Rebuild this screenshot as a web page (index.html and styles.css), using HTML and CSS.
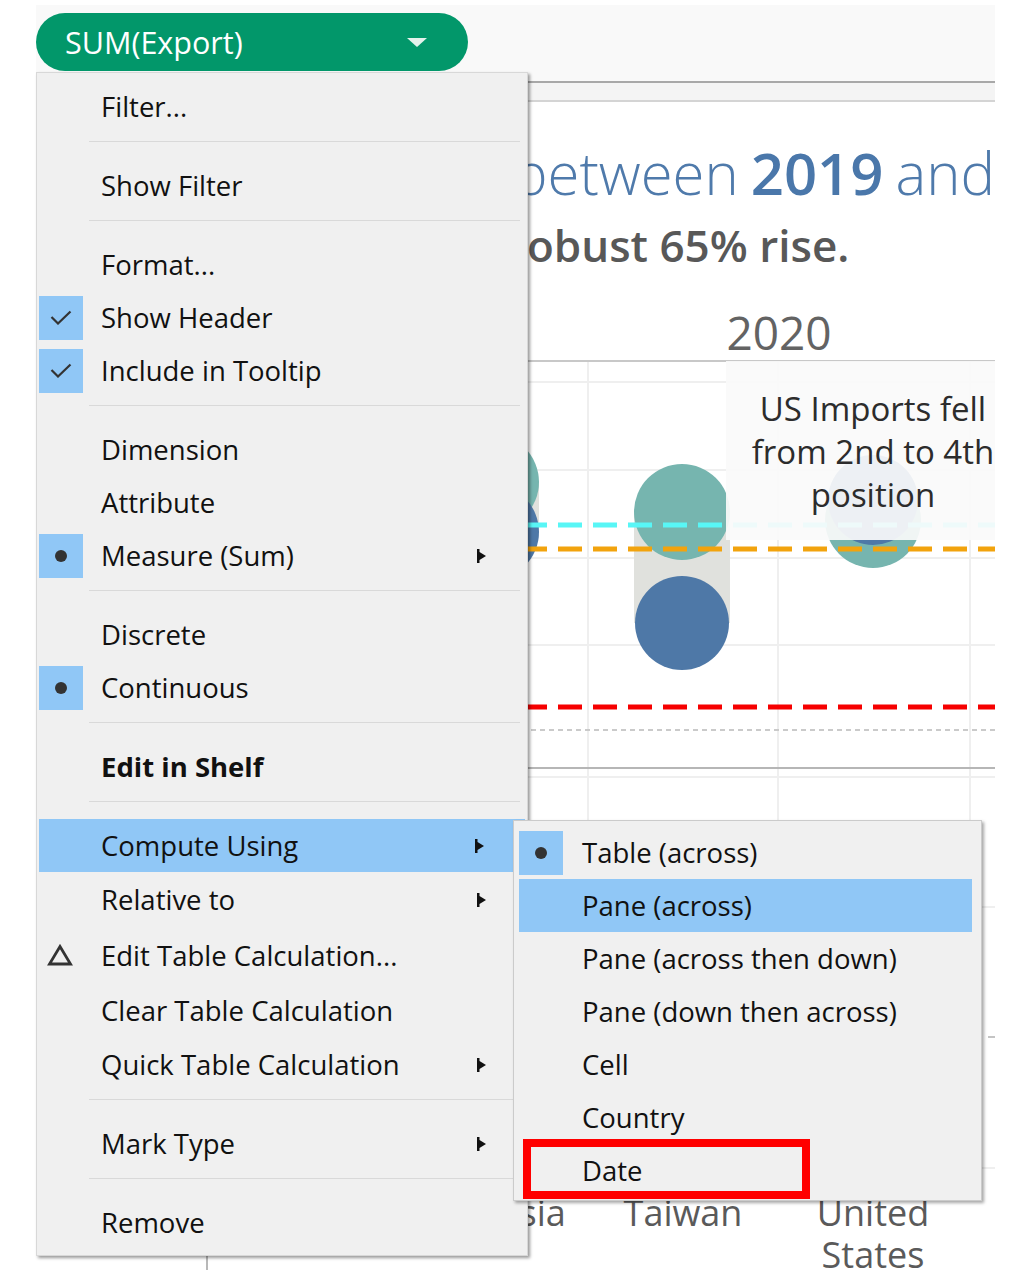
FILE: index.html
```html
<!DOCTYPE html>
<html>
<head>
<meta charset="utf-8">
<link rel="stylesheet" href="styles.css">
</head>
<body>
<div class="page">
  <div class="sheet">
    <div class="topband"></div>
    <div class="rule dark"></div>
    <div class="band2"></div>
    <div class="rule light"></div>
    <div class="title1">between <b>2019</b> and</div>
    <div class="title2">robust 65% rise.</div>
    <div class="year">2020</div>
    <div class="plot">
      <svg class="plotsvg" width="959" height="832" viewBox="0 0 959 832">
        <g stroke="#efefef" stroke-width="2">
          <line x1="170" y1="0" x2="170" y2="832"/>
          <line x1="552" y1="0" x2="552" y2="832"/>
          <line x1="742" y1="0" x2="742" y2="832"/>
          <line x1="934" y1="0" x2="934" y2="832"/>
          <line x1="0" y1="22" x2="959" y2="22"/>
          <line x1="0" y1="110" x2="959" y2="110"/>
          <line x1="0" y1="198" x2="959" y2="198"/>
          <line x1="0" y1="285" x2="959" y2="285"/>
          <line x1="0" y1="417" x2="959" y2="417"/>
          <line x1="0" y1="547" x2="959" y2="547"/>
          <line x1="0" y1="808" x2="959" y2="808"/>
        </g>
        <line x1="0" y1="1" x2="959" y2="1" stroke="#c8c8c8" stroke-width="2"/>
        <line x1="0" y1="408" x2="959" y2="408" stroke="#b6b6b6" stroke-width="2"/>
        <line x1="0" y1="677" x2="959" y2="677" stroke="#c4c4c4" stroke-width="2" stroke-dasharray="8 6"/>
        <rect x="407" y="122" width="96" height="50" fill="#e0e1dd"/>
        <circle cx="455" cy="122" r="48" fill="#76b5af"/>
        <circle cx="455" cy="172" r="48" fill="#4e78a7"/>
        <rect x="598" y="152" width="96" height="111" fill="#e0e1dd"/>
        <circle cx="646" cy="152" r="48" fill="#76b5af"/>
        <circle cx="646" cy="263" r="47" fill="#4e78a7"/>
        <circle cx="837" cy="160" r="48" fill="#76b5af"/>
        <circle cx="837" cy="140" r="45" fill="#4e78a7"/>
        <g stroke-width="5" stroke-dasharray="24 11">
          <line x1="32" y1="165" x2="959" y2="165" stroke="#58f6f6"/>
          <line x1="32" y1="189" x2="959" y2="189" stroke="#f2a30d"/>
          <line x1="32" y1="347" x2="959" y2="347" stroke="#f60000"/>
        </g>
        <line x1="0" y1="370" x2="959" y2="370" stroke="#cacaca" stroke-width="2" stroke-dasharray="5 4"/>
      </svg>
      <div class="annot">US Imports fell<br>from 2nd to 4th<br>position</div>
    </div>
    <div class="labels">
      <div class="lcol first"></div>
      <div class="lcol">Malaysia</div>
      <div class="lcol">Taiwan</div>
      <div class="lcol">United States</div>
    </div>
  </div>

  <div class="pill">
    <span class="pilltext">SUM(Export)</span>
    <svg class="pillarrow" width="20" height="9" viewBox="0 0 20 9"><polygon points="0,0 20,0 10,9" fill="#e4f2ec"/></svg>
  </div>

  <div class="menu">
    <div class="mi"><span class="ic"></span><span class="tx">Filter...</span></div>
    <div class="sep"></div>
    <div class="mi"><span class="ic"></span><span class="tx">Show Filter</span></div>
    <div class="sep"></div>
    <div class="mi"><span class="ic"></span><span class="tx">Format...</span></div>
    <div class="mi"><span class="ic on"><svg width="22" height="15" viewBox="0 0 22 15"><polyline points="1.5,7 8,13.5 20.5,1.5" fill="none" stroke="#333" stroke-width="2.2"/></svg></span><span class="tx">Show Header</span></div>
    <div class="mi"><span class="ic on"><svg width="22" height="15" viewBox="0 0 22 15"><polyline points="1.5,7 8,13.5 20.5,1.5" fill="none" stroke="#333" stroke-width="2.2"/></svg></span><span class="tx">Include in Tooltip</span></div>
    <div class="sep"></div>
    <div class="mi"><span class="ic"></span><span class="tx">Dimension</span></div>
    <div class="mi"><span class="ic"></span><span class="tx">Attribute</span></div>
    <div class="mi"><span class="ic on"><span class="dot"></span></span><span class="tx">Measure (Sum)</span><svg class="arr" width="9" height="14" viewBox="0 0 9 14"><polygon points="0,0 2.5,0 2.5,3 9,7 2.5,11 2.5,14 0,14" fill="#111"/></svg></div>
    <div class="sep"></div>
    <div class="mi"><span class="ic"></span><span class="tx">Discrete</span></div>
    <div class="mi"><span class="ic on"><span class="dot"></span></span><span class="tx">Continuous</span></div>
    <div class="sep"></div>
    <div class="mi"><span class="ic"></span><span class="tx bold">Edit in Shelf</span></div>
    <div class="sep"></div>
    <div class="mi hl"><span class="ic"></span><span class="tx">Compute Using</span><svg class="arr" width="9" height="14" viewBox="0 0 9 14"><polygon points="0,0 2.5,0 2.5,3 9,7 2.5,11 2.5,14 0,14" fill="#111"/></svg></div>
    <div class="mi h55"><span class="ic"></span><span class="tx">Relative to</span><svg class="arr" width="9" height="14" viewBox="0 0 9 14"><polygon points="0,0 2.5,0 2.5,3 9,7 2.5,11 2.5,14 0,14" fill="#111"/></svg></div>
    <div class="mi h56"><span class="ic delta"><svg width="26" height="22" viewBox="0 0 26 22"><polygon points="13,2.5 23.5,20 2.5,20" fill="none" stroke="#333" stroke-width="2.8" stroke-linejoin="miter"/></svg></span><span class="tx">Edit Table Calculation...</span></div>
    <div class="mi h55"><span class="ic"></span><span class="tx">Clear Table Calculation</span></div>
    <div class="mi"><span class="ic"></span><span class="tx">Quick Table Calculation</span><svg class="arr" width="9" height="14" viewBox="0 0 9 14"><polygon points="0,0 2.5,0 2.5,3 9,7 2.5,11 2.5,14 0,14" fill="#111"/></svg></div>
    <div class="sep"></div>
    <div class="mi"><span class="ic"></span><span class="tx">Mark Type</span><svg class="arr" width="9" height="14" viewBox="0 0 9 14"><polygon points="0,0 2.5,0 2.5,3 9,7 2.5,11 2.5,14 0,14" fill="#111"/></svg></div>
    <div class="sep"></div>
    <div class="mi"><span class="ic"></span><span class="tx">Remove</span></div>
  </div>

  <div class="submenu">
    <div class="si"><span class="ic on"><span class="dot"></span></span><span class="tx">Table (across)</span></div>
    <div class="si hl"><span class="ic"></span><span class="tx">Pane (across)</span></div>
    <div class="si"><span class="ic"></span><span class="tx">Pane (across then down)</span></div>
    <div class="si"><span class="ic"></span><span class="tx">Pane (down then across)</span></div>
    <div class="si"><span class="ic"></span><span class="tx">Cell</span></div>
    <div class="si"><span class="ic"></span><span class="tx">Country</span></div>
    <div class="si"><span class="ic"></span><span class="tx">Date</span></div>
  </div>

  <div class="redbox"></div>
</div>
</body>
</html>
```

FILE: styles.css
```css
html, body {
  margin: 0;
  padding: 0;
  background: #ffffff;
}
.page {
  position: relative;
  width: 1025px;
  height: 1270px;
  overflow: hidden;
  font-family: "Open Sans", "Noto Sans", sans-serif;
}
.sheet {
  margin-left: 36px;
  padding-top: 5px;
  width: 959px;
  height: 1265px;
  overflow: hidden;
}
.topband {
  height: 76px;
  background: #f9f9f9;
}
.rule.dark {
  height: 2px;
  background: #a8a8a8;
}
.band2 {
  height: 17px;
  background: #f4f4f4;
}
.rule.light {
  height: 2px;
  background: #d4d4d4;
}
.title1 {
  margin-top: 36px;
  height: 70px;
  line-height: 70px;
  padding-left: 477px;
  white-space: nowrap;
  word-spacing: -3px;
  font-size: 58px;
  font-weight: 300;
  color: #4f7aab;
}
.title1 b {
  font-weight: 600;
  color: #4a77aa;
}
.title2 {
  margin-top: 12px;
  height: 50px;
  line-height: 50px;
  padding-left: 472px;
  white-space: nowrap;
  font-size: 44px;
  font-weight: 600;
  color: #585858;
}
.year {
  margin-top: 34px;
  margin-left: 552px;
  width: 382px;
  height: 56px;
  line-height: 56px;
  text-align: center;
  font-size: 46px;
  color: #636363;
}
.plot {
  position: relative;
  height: 832px;
}
.plotsvg {
  display: block;
}
.annot {
  position: absolute;
  left: 690px;
  top: 1px;
  width: 294px;
  height: 179px;
  box-sizing: border-box;
  padding-top: 26px;
  background: rgba(250, 250, 250, 0.93);
  text-align: center;
  font-size: 33px;
  line-height: 43px;
  color: #2c2c2c;
}
.labels {
  display: flex;
  padding-left: 170px;
  font-size: 36px;
  line-height: 42px;
  color: #5a5a5a;
}
.lcol {
  width: 190px;
  flex: none;
  text-align: center;
}
.lcol.first {
  width: 190px;
  height: 84px;
  border-left: 2px solid #b8b8b8;
}

/* pill */
.pill {
  position: absolute;
  left: 36px;
  top: 13px;
  width: 432px;
  height: 58px;
  border-radius: 29px;
  background: #02976a;
  display: flex;
  align-items: center;
  box-sizing: border-box;
  padding-left: 29px;
  z-index: 3;
}
.pilltext {
  color: #ffffff;
  font-size: 30.5px;
}
.pillarrow {
  margin-left: auto;
  margin-right: 41px;
}

/* main menu */
.menu {
  position: absolute;
  left: 36px;
  top: 72px;
  width: 492px;
  box-sizing: border-box;
  background: #f0f0f0;
  border: 1px solid #d8d8d8;
  padding: 7px 0 6px;
  box-shadow: 2px 2px 3px rgba(0, 0, 0, 0.4);
  z-index: 2;
  font-size: 27.5px;
  color: #111;
}
.mi {
  display: flex;
  align-items: center;
  height: 53px;
}
.mi.h55 {
  height: 55px;
}
.mi.h56 {
  height: 56px;
}
.mi.hl {
  background: #90c7f6;
  margin: 0 2px;
}
.mi.hl .ic {
  margin-left: 0;
}
.ic {
  width: 44px;
  height: 44px;
  margin-left: 2px;
  flex: none;
  display: flex;
  align-items: center;
  justify-content: center;
}
.ic.on {
  background: #90c7f6;
}
.ic.delta {
  justify-content: flex-start;
  padding-left: 8px;
  box-sizing: border-box;
}
.dot {
  width: 12px;
  height: 12px;
  border-radius: 50%;
  background: #333;
}
.tx {
  margin-left: 18px;
  white-space: nowrap;
}
.tx.bold {
  font-weight: 700;
}
.arr {
  margin-left: auto;
  margin-right: 41px;
  flex: none;
}
.sep {
  height: 1px;
  background: #d9d9d9;
  margin: 8px 7px 17px 52px;
}

/* submenu */
.submenu {
  position: absolute;
  left: 513px;
  top: 820px;
  width: 469px;
  box-sizing: border-box;
  background: #f0f0f0;
  border: 1px solid #cbcbcb;
  padding: 5px 0 3px;
  box-shadow: 2px 2px 3px rgba(0, 0, 0, 0.35);
  z-index: 4;
  font-size: 27.5px;
  color: #111;
}
.si {
  display: flex;
  align-items: center;
  height: 53px;
}
.si .ic {
  margin-left: 5px;
}
.si .tx {
  margin-left: 19px;
}
.si.hl {
  background: #90c7f6;
  margin: 0 9px 0 5px;
}
.si.hl .ic {
  margin-left: 0;
}

.redbox {
  position: absolute;
  left: 523px;
  top: 1139px;
  width: 287px;
  height: 60px;
  box-sizing: border-box;
  border: 8px solid #ff0000;
  z-index: 5;
}
```
